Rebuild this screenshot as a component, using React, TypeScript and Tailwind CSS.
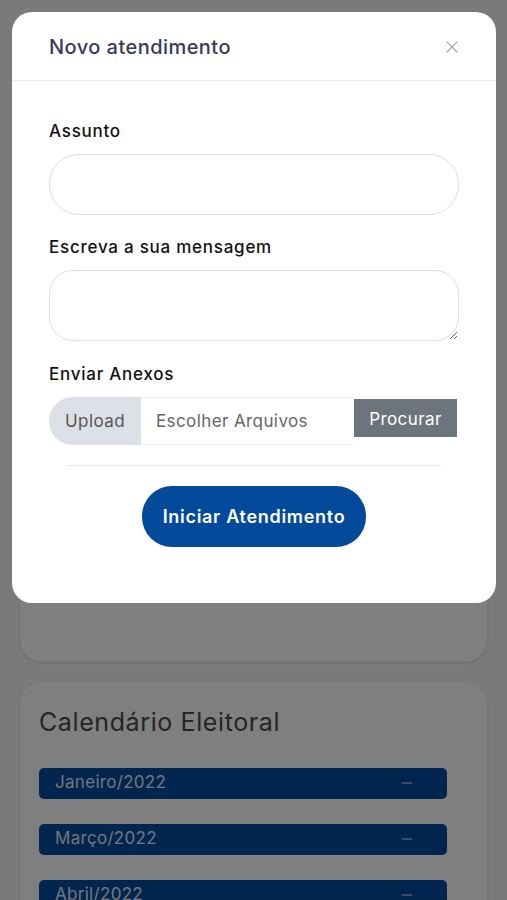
import React from 'react';
import { X, Minus } from 'lucide-react';

const font = { fontFamily: 'Inter, "Noto Sans", sans-serif' };

function CalendarRow({ label }: { label: string }) {
  return (
    <div className="flex h-[31px] items-center justify-between rounded-[5px] bg-[#004a9f] pl-4 pr-8 text-[17px] tracking-[0.3px] text-[#e8ecf3]">
      <span>{label}</span>
      <Minus className="h-4 w-4" strokeWidth={1.5} />
    </div>
  );
}

function NewTicketModal() {
  return (
    <div className="absolute inset-0 bg-black/50">
      <div className="absolute left-3 right-[11px] top-3 rounded-[20px] bg-white">
        <div className="flex h-[69px] items-center justify-between border-b border-[#eeeeee] pl-[37px] pr-[34px] pt-[1px]">
          <h3 className="text-[20px] font-medium tracking-[0.45px] text-[#383a5c]">Novo atendimento</h3>
          <X className="h-5 w-5 text-[#a6a6a6]" strokeWidth={1.4} />
        </div>

        <div className="px-[37px] pb-[56px] pt-[38px]">
          <label className="block text-[17px] font-medium leading-6 tracking-[0.75px] text-[#111]">Assunto</label>
          <input className="mt-[11px] block h-[61px] w-full rounded-[30px] border border-[#dedede] px-5 outline-none" />

          <label className="mt-5 block text-[17px] font-medium leading-6 tracking-[0.75px] text-[#111]">
            Escreva a sua mensagem
          </label>
          <textarea className="mt-[11px] block h-[71px] w-full rounded-[24px] border border-[#dedede] px-5 py-3 outline-none" />

          <label className="mt-[21px] block text-[17px] font-medium leading-6 tracking-[0.75px] text-[#111]">
            Enviar Anexos
          </label>
          <div className="mt-[11px] flex h-12 w-[408px] items-stretch text-[17px] tracking-[0.4px]">
            <div className="flex w-[92px] items-center justify-center rounded-l-full bg-[#dde0e7] pt-[2px] text-[#555]">
              Upload
            </div>
            <div className="flex flex-1 items-center border-y border-[#f0f0f0] pl-[15px] pt-[2px] text-[#666]">
              Escolher Arquivos
            </div>
            <div className="mt-[2px] flex h-[38px] w-[103px] items-center justify-center bg-[#6c757d] pt-[3px] text-white">
              Procurar
            </div>
          </div>

          <div className="mx-[18px] mt-[20px] border-t border-[#e6e6e6]" />

          <div className="mt-5 flex justify-center">
            <button className="h-[61px] w-[224px] rounded-[30px] bg-[#034b9a] text-[18px] font-semibold tracking-[0.7px] text-white">
              Iniciar Atendimento
            </button>
          </div>
        </div>
      </div>
    </div>
  );
}

export default function App() {
  return (
    <div className="relative h-[900px] overflow-hidden bg-[#f4f4f4]" style={font}>
      <div className="flex flex-col gap-5 px-5 pt-[40px]">
        <div className="h-[622px] rounded-[22px] bg-white shadow-sm" />
        <div className="rounded-[22px] bg-white px-[19px] pb-10 pt-[22px] shadow-sm">
          <h2 className="text-[25px] tracking-[0.6px] text-[#4a4a4a]">Calendário Eleitoral</h2>
          <div className="mr-[21px] mt-[26px] flex flex-col gap-[25px]">
            <CalendarRow label="Janeiro/2022" />
            <CalendarRow label="Março/2022" />
            <CalendarRow label="Abril/2022" />
            <CalendarRow label="Maio/2022" />
          </div>
        </div>
      </div>
      <NewTicketModal />
    </div>
  );
}
